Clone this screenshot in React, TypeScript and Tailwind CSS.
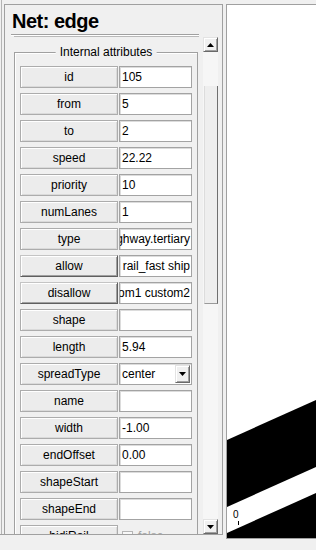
import React from "react";

type Row = {
  label: string;
  value: string;
  kind?: "text" | "list" | "select" | "check";
  raised?: boolean;
};

const rows: Row[] = [
  { label: "id", value: "105" },
  { label: "from", value: "5" },
  { label: "to", value: "2" },
  { label: "speed", value: "22.22" },
  { label: "priority", value: "10" },
  { label: "numLanes", value: "1" },
  { label: "type", value: "highway.tertiary", kind: "list" },
  { label: "allow", value: "rail_urban rail rail_electric rail_fast ship", kind: "list", raised: true },
  { label: "disallow", value: "evehicle custom1 custom2", kind: "list", raised: true },
  { label: "shape", value: "" },
  { label: "length", value: "5.94" },
  { label: "spreadType", value: "center", kind: "select" },
  { label: "name", value: "" },
  { label: "width", value: "-1.00" },
  { label: "endOffset", value: "0.00" },
  { label: "shapeStart", value: "" },
  { label: "shapeEnd", value: "" },
  { label: "bidiRail", value: "false", kind: "check" },
];

const Arrow = ({ down }: { down?: boolean }) => (
  <svg width="7" height="4" viewBox="0 0 7 4">
    <polygon points={down ? "0,0 7,0 3.5,4" : "0,4 7,4 3.5,0"} fill="#000" />
  </svg>
);

// raised 3d button face used by scrollbar + combo arrow
const raised =
  "bg-[#f0f0f0] border-t border-l border-t-[#e3e3e3] border-l-[#e3e3e3] border-b border-r border-b-[#696969] border-r-[#696969] shadow-[inset_1px_1px_0_#ffffff,inset_-1px_-1px_0_#a0a0a0]";

function Field({ row }: { row: Row }) {
  if (row.kind === "check") {
    return (
      <div className="w-[73px] h-[22px] flex items-center pl-[3px] gap-[5px]">
        <span className="w-[11px] h-[11px] border border-[#b5b5b5] bg-[#f8f8f8]" />
        <span className="text-[#a3a3a3]">{row.value}</span>
      </div>
    );
  }
  if (row.kind === "select") {
    return (
      <div className="w-[73px] h-[22px] bg-white border border-[#a3a3a3] shadow-[inset_1px_1px_0_#dcdcdc] flex items-center justify-between pl-[2px] pr-[1px]">
        <span>{row.value}</span>
        <div className={`w-[15px] h-[18px] flex items-center justify-center ${raised}`}>
          <Arrow down />
        </div>
      </div>
    );
  }
  return (
    <div
      className={`w-[73px] h-[22px] bg-white border border-[#a3a3a3] shadow-[inset_1px_1px_0_#dcdcdc] flex items-center overflow-hidden whitespace-nowrap ${
        row.kind === "list" ? "justify-end pr-[1px]" : "pl-[2px]"
      }`}
    >
      <span className="flex-none">{row.value}</span>
    </div>
  );
}

export default function App() {
  return (
    <div className="w-[316px] h-[550px] bg-[#f0f0f0] flex items-start overflow-hidden font-['Liberation_Sans',Arial,sans-serif] text-[12px] text-black">
      {/* attribute panel */}
      <div className="w-[223px] h-[535px] flex-none border-b border-[#a0a0a0] flex">
        <div className="ml-[1px] pl-[2px] border-l border-[#b4b4b4] flex-1 flex">
          <div className="flex-1 mt-[4px] border-l border-t border-r border-[#a0a0a0] flex flex-col">
            <div className="pt-[4px] pl-[7px] leading-[24px] text-[20px] font-bold tracking-[-0.5px]">
              Net: edge
            </div>
            <div className="mt-[1px] ml-[6px] w-[188px]">
              <div className="h-[1px] bg-[#a0a0a0]" />
              <div className="h-[1px] bg-white" />
              <div className="h-[1px] ml-[3px] bg-[#b9b9b9]" />
            </div>

            <div className="flex-1 flex min-h-0">
              {/* scrolled content */}
              <div className="w-[198px] overflow-hidden">
                <div className="relative mt-[15px] ml-[9px] w-[184px] border border-[#a0a0a0] shadow-[inset_1px_1px_0_#ffffff] pt-[13px] pl-[5px] pb-[6px]">
                  <span className="absolute -top-[8px] left-1/2 -translate-x-1/2 px-[4px] bg-[#f0f0f0] leading-[14px] whitespace-nowrap">
                    Internal attributes
                  </span>
                  <div className="flex flex-col gap-[5px]">
                    {rows.map((r) => (
                      <div key={r.label} className="flex gap-[1px]">
                        <div
                          className={`w-[98px] h-[22px] flex items-center justify-center bg-[#ececec] ${
                            r.raised
                              ? "border-t border-l border-[#c4c4c4] border-b border-r border-b-[#5f5f5f] border-r-[#5f5f5f] shadow-[inset_1px_1px_0_#ffffff,inset_-1px_-1px_0_#a0a0a0]"
                              : "border border-[#acacac] shadow-[inset_1px_1px_0_#ffffff,inset_-1px_-1px_0_#dadada]"
                          }`}
                        >
                          {r.label}
                        </div>
                        <Field row={r} />
                      </div>
                    ))}
                  </div>
                </div>
              </div>

              {/* scrollbar */}
              <div className="w-[15px] flex flex-col bg-[#f6f6f6]">
                <div className={`h-[15px] flex items-center justify-center ${raised}`}>
                  <Arrow />
                </div>
                <div className="h-[34px]" />
                <div className="h-[218px] ml-[1px] bg-[#eeeeee] border-l border-[#dcdcdc] border-r border-r-[#6f6f6f] border-b border-b-[#9a9a9a]" />
                <div className="flex-1" />
                <div className={`h-[15px] flex items-center justify-center ${raised}`}>
                  <Arrow down />
                </div>
              </div>
            </div>
          </div>
        </div>
      </div>

      {/* view canvas */}
      <div className="ml-[3px] mt-[4px] h-[535px] flex-1 border-l border-t border-b border-[#a0a0a0] bg-white">
        <svg width="89" height="533" viewBox="227 5 89 533" className="block">
          <polygon points="227,440 316,400 316,467 227,507" fill="#000" />
          <polygon points="227,533 316,493 316,538 227,538" fill="#000" />
          <text x="233" y="518" fontSize="10" fontFamily="Liberation Sans, Arial, sans-serif" fill="#000">
            0
          </text>
          <line x1="238.5" y1="521" x2="238.5" y2="525" stroke="#000" strokeWidth="1" />
        </svg>
      </div>
    </div>
  );
}
